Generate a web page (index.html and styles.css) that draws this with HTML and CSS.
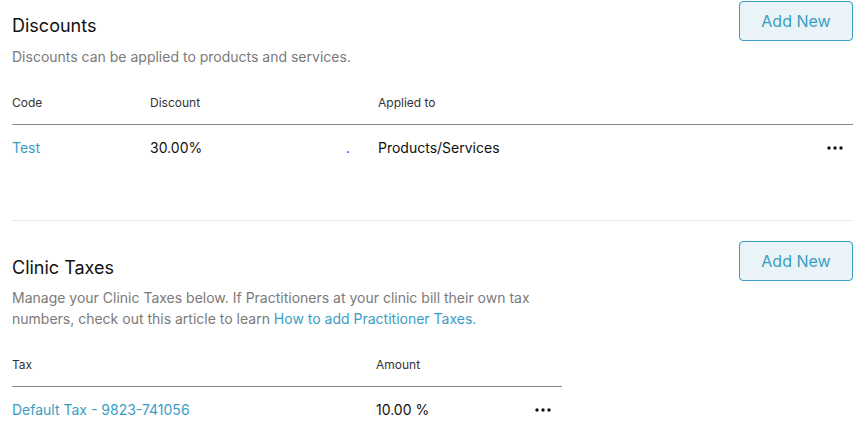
FILE: index.html
```html
<!DOCTYPE html>
<html>
<head>
<meta charset="utf-8">
<link rel="stylesheet" href="styles.css">
</head>
<body>
<section class="section first">
  <div class="head">
    <div class="intro">
      <h2 class="title">Discounts</h2>
      <p class="desc">Discounts can be applied to products and services.</p>
    </div>
    <button class="btn">Add New</button>
  </div>
  <div class="table discounts">
    <div class="th">Code</div>
    <div class="th">Discount</div>
    <div class="th"></div>
    <div class="th">Applied to</div>
    <div class="th"></div>
    <div class="td link">Test</div>
    <div class="td">30.00%</div>
    <div class="td dot">.</div>
    <div class="td">Products/Services</div>
    <div class="td more"><svg width="16" height="4" viewBox="0 0 16 4"><circle cx="2" cy="2" r="1.7"/><circle cx="8" cy="2" r="1.7"/><circle cx="14" cy="2" r="1.7"/></svg></div>
  </div>
</section>
<hr class="divider">
<section class="section second">
  <div class="head">
    <div class="intro">
      <h2 class="title">Clinic Taxes</h2>
      <p class="desc wide">Manage your Clinic Taxes below. If Practitioners at your clinic bill their own tax numbers, check out this article to learn <a class="link" href="#">How to add Practitioner Taxes.</a></p>
    </div>
    <button class="btn">Add New</button>
  </div>
  <div class="table taxes">
    <div class="th">Tax</div>
    <div class="th">Amount</div>
    <div class="th"></div>
    <div class="td link">Default Tax - 9823-741056</div>
    <div class="td">10.00 %</div>
    <div class="td more"><svg width="16" height="4" viewBox="0 0 16 4"><circle cx="2" cy="2" r="1.7"/><circle cx="8" cy="2" r="1.7"/><circle cx="14" cy="2" r="1.7"/></svg></div>
  </div>
</section>
</body>
</html>
```
FILE: styles.css
```css
* { box-sizing: border-box; }
body {
  margin: 0;
  padding: 0 8px 0 12px;
  font-family: Inter, "Noto Sans", sans-serif;
  color: #111;
  background: #fff;
}
.section.first { padding-top: 1px; }
.head {
  display: flex;
  justify-content: space-between;
  align-items: flex-start;
}
.title {
  margin: 14px 0 0;
  font-size: 18px;
  line-height: 22px;
  font-weight: 400;
  color: #111;
}
.desc {
  margin: 9px 0 0;
  font-size: 14px;
  line-height: 21px;
  color: #7a7a7a;
}
.desc.wide { max-width: 550px; margin-top: 8px; }
.btn {
  width: 114px;
  height: 40px;
  border: 1px solid #3b9dc3;
  border-radius: 4px;
  background: #eaf3f7;
  color: #3b9dc3;
  font-family: Inter, "Noto Sans", sans-serif;
  font-size: 16px;
  padding: 0;
  margin: 0;
}
.table {
  display: grid;
  align-items: center;
}
.discounts {
  margin-top: 28px;
  grid-template-columns: 138px 196px 32px 1fr auto;
  height: 125px;
  grid-template-rows: 30px auto;
  align-content: start;
}
.taxes {
  margin-top: 28px;
  width: 550px;
  grid-template-columns: 364px 1fr auto;
  grid-template-rows: 30px auto;
}
.th {
  font-size: 12px;
  line-height: 16px;
  color: #333;
  padding-bottom: 14px;
  border-bottom: 1px solid #8a8a8a;
  align-self: stretch;
}
.td {
  font-size: 14px;
  line-height: 20px;
  padding-top: 13px;
  color: #111;
}
.link { color: #3b9dc3; text-decoration: none; }
.dot { color: #2233ee; }
.more { padding-right: 10px; display: flex; align-items: center; padding-top: 13px; height: 33px; }
.taxes .more { padding-right: 11px; }
.more svg { fill: #111; }
.divider {
  margin: 0;
  border: 0;
  border-top: 1px solid #e6e6e6;
}
.section.second { padding-top: 20px; }
.second .title { margin-top: 16px; }
```
